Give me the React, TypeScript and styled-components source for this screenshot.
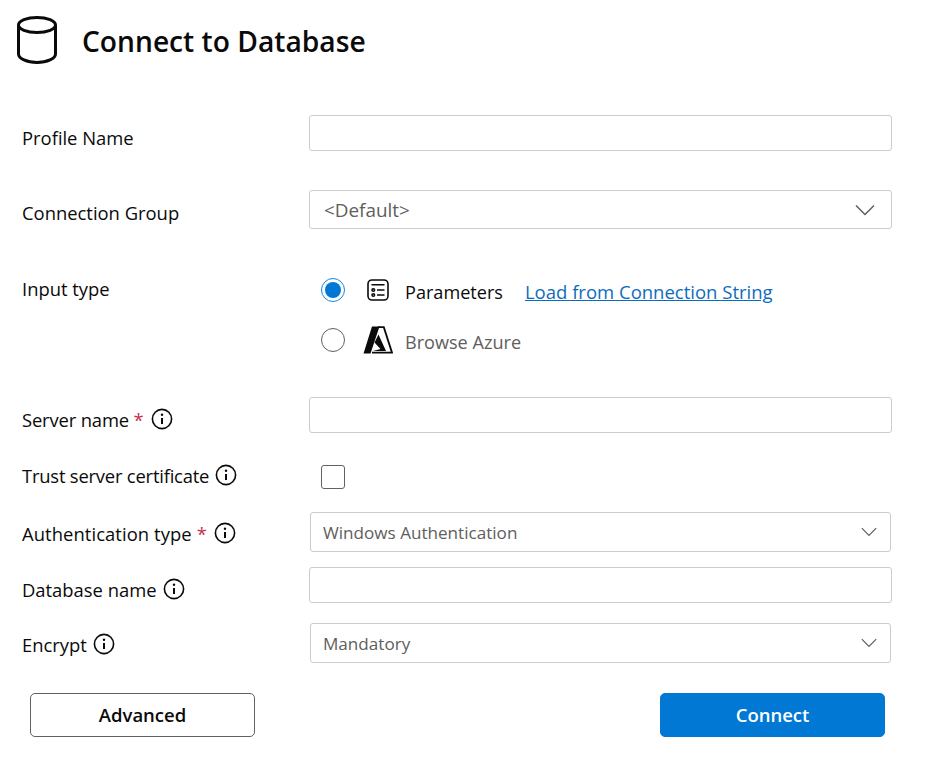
import styled, { createGlobalStyle } from "styled-components";

const GlobalStyle = createGlobalStyle`
    html, body {
        margin: 0;
        padding: 0;
        background: #ffffff;
    }
    body {
        font-family: "Open Sans", "Noto Sans", "Liberation Sans", sans-serif;
        color: #0a0a0a;
    }
`;

const Page = styled.div`
    width: 928px;
    height: 760px;
    box-sizing: border-box;
    padding: 15px 36px 0 22px;
    overflow: hidden;
`;

const Header = styled.header`
    display: flex;
    align-items: center;
    height: 50px;
    margin-left: -5px;
    gap: 25px;
`;

const Title = styled.h1`
    margin: 2px 0 0;
    font-size: 28.2px;
    font-weight: 600;
    color: #0a0a0a;
`;

const Row = styled.div<{ $top: number; $height: number }>`
    display: grid;
    grid-template-columns: 287px 1fr;
    align-items: start;
    margin-top: ${(props) => props.$top}px;
    height: ${(props) => props.$height}px;
`;

const Label = styled.label<{ $offset: number; $spacing?: number }>`
    display: flex;
    align-items: center;
    gap: 6px;
    height: 24px;
    margin-top: ${(props) => props.$offset}px;
    font-size: 18.4px;
    letter-spacing: ${(props) => props.$spacing ?? 0}px;
    white-space: nowrap;
`;

const Star = styled.span`
    color: #c4314b;
    margin-right: 1px;
`;

const TextInput = styled.input`
    display: block;
    box-sizing: border-box;
    width: 100%;
    height: 36px;
    border: 1px solid #cccccc;
    border-radius: 3px;
    background: #ffffff;
`;

const Select = styled.div<{ $inset: boolean; $height: number }>`
    display: flex;
    align-items: center;
    justify-content: space-between;
    box-sizing: border-box;
    height: ${(props) => props.$height}px;
    margin: 0 ${(props) => (props.$inset ? "1px" : "0")};
    padding: 0 ${(props) => (props.$inset ? "13px 0 12px" : "16px 0 14px")};
    border: 1px solid #cccccc;
    border-radius: 3px;
    font-size: ${(props) => (props.$inset ? "17.1px" : "18.9px")};
    color: #605e5c;
`;

const Options = styled.div`
    display: flex;
    flex-direction: column;
    gap: 26px;
    padding: 0 0 0 12px;
`;

const Option = styled.div`
    display: flex;
    align-items: center;
    height: 24px;
`;

const Radio = styled.span<{ $checked?: boolean }>`
    display: flex;
    align-items: center;
    justify-content: center;
    box-sizing: border-box;
    width: 24px;
    height: 24px;
    border-radius: 50%;
    border: 1px solid ${(props) => (props.$checked ? "#0f8ae6" : "#616161")};
    &::after {
        content: "";
        display: ${(props) => (props.$checked ? "block" : "none")};
        width: 16px;
        height: 16px;
        border-radius: 50%;
        background: #0078d4;
    }
`;

const OptionIcon = styled.span`
    display: flex;
    justify-content: center;
    width: 32px;
    margin: 0 11px 0 17px;
`;

const OptionText = styled.span<{ $muted?: boolean }>`
    padding-top: 4px;
    font-size: 18.1px;
    color: ${(props) => (props.$muted ? "#605e5c" : "#0a0a0a")};
`;

const LoadLink = styled.a`
    margin-left: 22px;
    padding-top: 2px;
    font-size: 18.5px;
    color: #0f6cbd;
    text-decoration: underline;
`;

const CheckboxCell = styled.div`
    padding-left: 12px;
`;

const Checkbox = styled.span`
    display: block;
    box-sizing: border-box;
    width: 24px;
    height: 24px;
    border: 1px solid #616161;
    border-radius: 3px;
`;

const Footer = styled.div`
    display: flex;
    justify-content: space-between;
    margin: 30px 7px 0 8px;
`;

const Button = styled.button<{ $primary?: boolean }>`
    width: 225px;
    height: 44px;
    padding: 0 0 2px;
    border-radius: 5px;
    border: 1px solid ${(props) => (props.$primary ? "#0078d4" : "#616161")};
    background: ${(props) => (props.$primary ? "#0078d4" : "#ffffff")};
    color: ${(props) => (props.$primary ? "#ffffff" : "#0a0a0a")};
    font-family: inherit;
    font-size: 18.5px;
    font-weight: 600;
`;

const DatabaseIcon = () => (
    <svg width="40" height="50" viewBox="0 0 40 50" fill="none" stroke="#0a0a0a" strokeWidth="3">
        <ellipse cx="20" cy="10" rx="18.5" ry="7.5" />
        <path d="M1.5 10v29c0 4.6 8.3 8.5 18.5 8.5s18.5-3.9 18.5-8.5V10" />
    </svg>
);

const ParametersIcon = () => (
    <svg width="22" height="22" viewBox="0 0 22 22" fill="none" stroke="#0a0a0a" strokeWidth="1.6">
        <rect x="1" y="1" width="20" height="20" rx="4" />
        <path d="M4.5 5.8h13M10 11h7.5M10 16h7.5" />
        <circle cx="6.3" cy="11" r="1.3" />
        <circle cx="6.3" cy="16" r="1.3" />
    </svg>
);

const AzureIcon = () => (
    <svg width="30" height="28" viewBox="0 0 30 28">
        <path d="M9 .5H16.5L7.5 27.5H.5Z" fill="#0a0a0a" />
        <path d="M15 1.2H20.8L29 26.6H9" fill="none" stroke="#0a0a0a" strokeWidth="1.8" />
        <path d="M15.5 8.5 23 25H10L17.5 23 11.5 16.5Z" fill="#0a0a0a" />
    </svg>
);

const InfoIcon = () => (
    <svg width="22" height="22" viewBox="0 0 22 22" fill="none" stroke="#0a0a0a" strokeWidth="1.6">
        <circle cx="11" cy="11" r="9.6" />
        <path d="M11 10v6" strokeWidth="2" />
        <circle cx="11" cy="6.8" r="1.2" fill="#0a0a0a" stroke="none" />
    </svg>
);

const ChevronIcon = ({ size }: { size: number }) => (
    <svg width={size} height={size * 0.6} viewBox="0 0 20 12" fill="none" stroke="#605e5c" strokeWidth="1.5">
        <path d="M1 1.5 10 10.5 19 1.5" />
    </svg>
);

export default function App() {
    return (
        <Page>
            <GlobalStyle />
            <Header>
                <DatabaseIcon />
                <Title>Connect to Database</Title>
            </Header>

            <Row $top={50} $height={36}>
                <Label $offset={10}>Profile Name</Label>
                <TextInput />
            </Row>

            <Row $top={39} $height={39}>
                <Label $offset={10}>Connection Group</Label>
                <Select $inset={false} $height={39}>
                    &lt;Default&gt;
                    <ChevronIcon size={20} />
                </Select>
            </Row>

            <Row $top={49} $height={74}>
                <Label $offset={-2}>Input type</Label>
                <Options>
                    <Option>
                        <Radio $checked />
                        <OptionIcon>
                            <ParametersIcon />
                        </OptionIcon>
                        <OptionText>Parameters</OptionText>
                        <LoadLink>Load from Connection String</LoadLink>
                    </Option>
                    <Option>
                        <Radio />
                        <OptionIcon>
                            <AzureIcon />
                        </OptionIcon>
                        <OptionText $muted>Browse Azure</OptionText>
                    </Option>
                </Options>
            </Row>

            <Row $top={45} $height={36}>
                <Label $offset={10} $spacing={-0.15}>
                    <span>
                        Server name <Star>*</Star>
                    </span>
                    <InfoIcon />
                </Label>
                <TextInput />
            </Row>

            <Row $top={32} $height={24}>
                <Label $offset={-2} $spacing={-0.2}>
                    Trust server certificate
                    <InfoIcon />
                </Label>
                <CheckboxCell>
                    <Checkbox />
                </CheckboxCell>
            </Row>

            <Row $top={23} $height={40}>
                <Label $offset={9} $spacing={0.08}>
                    <span>
                        Authentication type <Star>*</Star>
                    </span>
                    <InfoIcon />
                </Label>
                <Select $inset $height={40}>
                    Windows Authentication
                    <ChevronIcon size={16} />
                </Select>
            </Row>

            <Row $top={15} $height={36}>
                <Label $offset={10}>
                    Database name
                    <InfoIcon />
                </Label>
                <TextInput />
            </Row>

            <Row $top={20} $height={40}>
                <Label $offset={9}>
                    Encrypt
                    <InfoIcon />
                </Label>
                <Select $inset $height={40}>
                    Mandatory
                    <ChevronIcon size={16} />
                </Select>
            </Row>

            <Footer>
                <Button>Advanced</Button>
                <Button $primary>Connect</Button>
            </Footer>
        </Page>
    );
}
